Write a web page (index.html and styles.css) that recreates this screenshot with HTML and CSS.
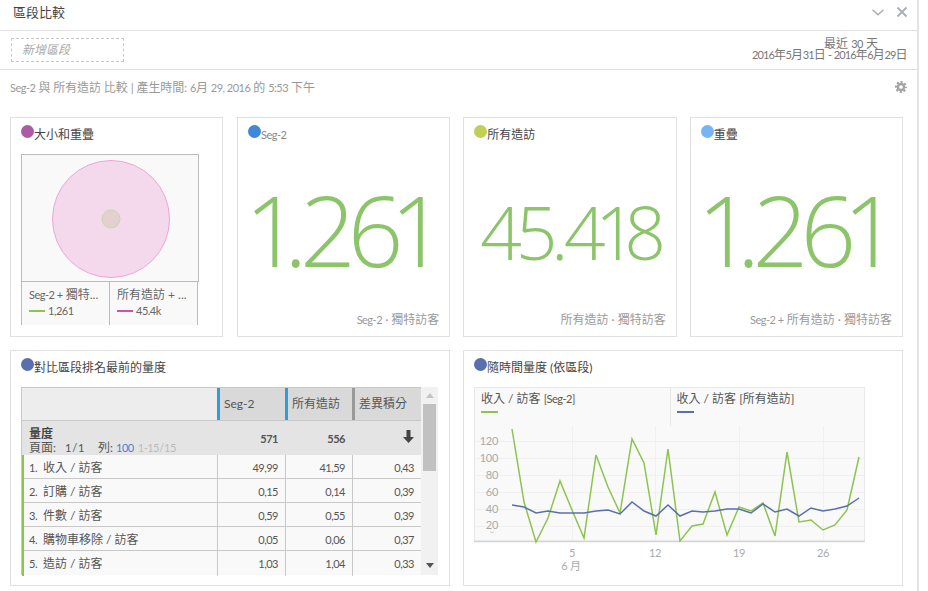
FILE: index.html
```html
<!doctype html>
<html>
  <head>
    <meta name="viewport" content="width=device-width, initial-scale=1">
    <link rel="stylesheet" href="styles.css">
    <title>區段比較</title>
  </head>
  <body>
    <div class="panel">
      <header class="title-bar">
        <h1>區段比較</h1>
        <div class="window-btns">
          <svg width="12" height="7" viewBox="0 0 12 7"><path d="M.5 .7L6 5.800 11.500 .7" fill="none" stroke="#a9b0b5" stroke-width="1.500"/></svg>
          <svg width="10" height="10" viewBox="0 0 10 10"><path d="M.5 .5l9 9M9.500 .5l-9 9" fill="none" stroke="#a9b0b5" stroke-width="2"/></svg>
        </div>
      </header>

      <div class="filter-bar">
        <div class="add-segment">新增區段</div>
        <div class="date-range">
          <div class="date-preset">最近 <span class="n">30</span> 天</div>
          <div class="date-dates"><span class="n">2016</span>年<span class="n">5</span>月<span class="n">31</span>日 <span class="n">-</span> <span class="n">2016</span>年<span class="n">6</span>月<span class="n">29</span>日</div>
        </div>
      </div>

      <div class="summary">
        <span><span class="n">Seg-2</span> 與 所有造訪 比較 | 產生時間: <span class="n">6</span>月 <span class="n">29, 2016</span> 的 <span class="n">5:53</span> 下午</span>
        <svg width="12" height="12" viewBox="0 0 13 13">
          <circle cx="6.500" cy="6.500" r="3.300" fill="none" stroke="#a5a5a5" stroke-width="2.600"/>
          <circle cx="6.500" cy="6.500" r="5.300" fill="none" stroke="#a5a5a5" stroke-width="2.400" stroke-dasharray="2.300 1.860" stroke-dashoffset="1.150"/>
        </svg>
      </div>

      <div class="card-row">
        <section class="card card-venn">
          <h2 class="card-title"><i class="dot dot-purple"></i>大小和重疊</h2>
          <div class="venn">
            <svg width="176" height="126" viewBox="0 0 176 126">
              <circle cx="89" cy="64" r="58.500" fill="#f4d9ec" stroke="#eda6d5"/>
              <circle cx="89" cy="64" r="9" fill="#e3d0cf" stroke="#c5d9a2"/>
            </svg>
          </div>
          <div class="venn-legend">
            <div class="venn-item">
              <div class="venn-name"><span class="n">Seg-2 +</span> 獨特...</div>
              <div class="venn-val"><i class="key key-green"></i>1,261</div>
            </div>
            <div class="venn-item">
              <div class="venn-name">所有造訪 + ...</div>
              <div class="venn-val"><i class="key key-pink"></i>45.4k</div>
            </div>
          </div>
        </section>

        <section class="card card-metric">
          <h2 class="card-title"><i class="dot dot-blue"></i><span class="small-title n">Seg-2</span></h2>
          <div class="big-num">1.261</div>
          <div class="metric-note"><span class="n">Seg-2</span> · 獨特訪客</div>
        </section>

        <section class="card card-metric">
          <h2 class="card-title"><i class="dot dot-olive"></i>所有造訪</h2>
          <div class="big-num big-num-small">45.418</div>
          <div class="metric-note">所有造訪 · 獨特訪客</div>
        </section>

        <section class="card card-metric">
          <h2 class="card-title"><i class="dot dot-sky"></i>重疊</h2>
          <div class="big-num">1.261</div>
          <div class="metric-note"><span class="n">Seg-2 +</span> 所有造訪 · 獨特訪客</div>
        </section>
      </div>

      <div class="card-row card-row-low">
        <section class="card card-wide">
          <h2 class="card-title"><i class="dot dot-indigo"></i>對比區段排名最前的量度</h2>
          <div class="table-wrap">
            <div class="table">
              <div class="t-row t-head">
                <div class="c-name"></div>
                <div class="c-num seg seg-blue">Seg-2</div>
                <div class="c-num seg seg-blue">所有造訪</div>
                <div class="c-num seg seg-gray">差異積分</div>
              </div>
              <div class="t-row t-sub">
                <div class="c-name">
                  <div class="sub-title">量度</div>
                  <div class="pager">頁面: <span class="pager-gap n">1 / 1</span>列: <span class="pager-link n">100</span> <span class="pager-mute n">1-15 / 15</span></div>
                </div>
                <div class="c-num">571</div>
                <div class="c-num">556</div>
                <div class="c-num"><svg width="11" height="13" viewBox="0 0 11 13"><path fill="#444" d="M3.500 0h4v7H11l-5.500 6L0 7h3.500z"/></svg></div>
              </div>
              <div class="t-row t-body">
                <div class="c-name"><span class="rank">1.</span>收入 / 訪客</div>
                <div class="c-num">49,99</div><div class="c-num">41,59</div><div class="c-num">0,43</div>
              </div>
              <div class="t-row t-body">
                <div class="c-name"><span class="rank">2.</span>訂購 / 訪客</div>
                <div class="c-num">0,15</div><div class="c-num">0,14</div><div class="c-num">0,39</div>
              </div>
              <div class="t-row t-body">
                <div class="c-name"><span class="rank">3.</span>件數 / 訪客</div>
                <div class="c-num">0,59</div><div class="c-num">0,55</div><div class="c-num">0,39</div>
              </div>
              <div class="t-row t-body">
                <div class="c-name"><span class="rank">4.</span>購物車移除 / 訪客</div>
                <div class="c-num">0,05</div><div class="c-num">0,06</div><div class="c-num">0,37</div>
              </div>
              <div class="t-row t-body t-last">
                <div class="c-name"><span class="rank">5.</span>造訪 / 訪客</div>
                <div class="c-num">1,03</div><div class="c-num">1,04</div><div class="c-num">0,33</div>
              </div>
            </div>
            <div class="scrollbar">
              <svg class="arrow" width="8" height="5" viewBox="0 0 8 5"><path d="M4 0l4 5H0z" fill="#c4c4c4"/></svg>
              <div class="thumb"></div>
              <svg class="arrow arrow-down" width="8" height="5" viewBox="0 0 8 5"><path d="M0 0h8L4 5z" fill="#555"/></svg>
            </div>
          </div>
        </section>

        <section class="card card-wide">
          <h2 class="card-title"><i class="dot dot-indigo"></i>隨時間量度 (依區段)</h2>
          <div class="trend">
            <div class="trend-legend">
              <div class="trend-key"><div>收入 / 訪客 <span class="n">[Seg-2]</span></div><i class="key key-long key-green"></i></div>
              <div class="trend-key trend-key-2"><div>收入 / 訪客 [所有造訪]</div><i class="key key-long key-indigo"></i></div>
            </div>
            <svg class="plot" width="391" height="152" viewBox="474 426 391 152">
              <rect x="474.500" y="425" width="390" height="116" fill="#f9f9f9" stroke="#e8e8e8"/>
              <g stroke="#f0f0f0" stroke-width="1">
                <path d="M475 441.500h389M475 458.500h389M475 475.500h389M475 492.500h389M475 509.500h389M475 526.500h389"/>
                <path d="M572.500 426v115M655.500 426v115M739.500 426v115M823.500 426v115"/>
              </g>
              <path d="M474 541.500h392" stroke="#d4d4d4" stroke-width="1.500"/>
              <path d="M490 531.500l2 1.500 2-1.500" fill="none" stroke="#ccc"/>
              <g class="y-labels" text-anchor="end">
                <text x="498" y="445">120</text>
                <text x="498" y="462">100</text>
                <text x="498" y="479">80</text>
                <text x="498" y="496">60</text>
                <text x="498" y="513">40</text>
                <text x="498" y="529">20</text>
              </g>
              <g class="x-labels" text-anchor="middle">
                <text x="572" y="557">5</text>
                <text x="655" y="557">12</text>
                <text x="739" y="557">19</text>
                <text x="823" y="557">26</text>
                <text x="571" y="570">6 月</text>
              </g>
              <polyline fill="none" stroke="#8cc44f" stroke-width="1.500" points="512,429 524,502 536,542 548,518 560,481 572,510 584,538 596,455 608,487 620,513 632,439 644,463 656,535 668,449 680,541 692,526 703,524 715,492 727,535 739,507 751,511 763,503 775,536 787,452 799,522 811,520 823,530 835,525 847,510 859,457"/>
              <polyline fill="none" stroke="#5a6fad" stroke-width="1.500" points="512,505 524,507 536,513 548,511 560,513 572,513 584,513 596,511 608,510 620,514 632,502 644,511 656,516 668,505 680,516 692,511 703,512 715,511 727,509 739,509 751,513 763,504 775,512 787,509 799,516 811,508 823,511 835,509 847,506 859,498"/>
            </svg>
          </div>
        </section>
      </div>
    </div>
  </body>
</html>
```

FILE: styles.css
```css
* {
  box-sizing: border-box;
}

body {
  margin: 0;
  background: #fff;
  color: #555;
  font-family: "Lato", "Noto Sans CJK TC", sans-serif;
  font-size: 12px;
  overflow: hidden;
}

/* latin runs are narrower than Lato in the original */
.n,
.c-num,
.venn-val,
.rank {
  font-size: 11px;
  letter-spacing: -.5px;
}

.panel {
  width: 919px;
  height: 591px;
  border-right: 2px solid #e4e4e4;
}

.title-bar {
  height: 31px;
  padding: 0 10px 4px 13px;
  border-bottom: 1px solid #e0e0e0;
  display: flex;
  align-items: center;
  justify-content: space-between;
}

.title-bar h1 {
  margin: 0 0 3px;
  font-size: 13px;
  font-weight: 400;
  color: #444;
}

.window-btns {
  display: flex;
  align-items: center;
  gap: 13px;
  margin-top: -2px;
}

.filter-bar {
  height: 39px;
  padding: 7px 10px 0 11px;
  border-bottom: 1px solid #e0e0e0;
  display: flex;
  justify-content: space-between;
}

.add-segment {
  width: 113px;
  height: 24px;
  padding-left: 10px;
  border: 1px dashed #c8c8c8;
  color: #aaa;
  font-style: italic;
  line-height: 22px;
}

.date-range {
  text-align: right;
  color: #777;
  line-height: 11px;
}

.date-preset {
  margin-right: 29px;
}

.date-dates {
  letter-spacing: -.4px;
}

.date-dates .n {
  letter-spacing: -.9px;
}

.summary {
  height: 35px;
  padding: 0 10px 2px 10px;
  display: flex;
  align-items: center;
  justify-content: space-between;
  color: #999;
  letter-spacing: -.1px;
}

.card-row {
  width: 893px;
  display: flex;
  gap: 13px;
  margin: 12px 0 0 10px;
}

.card-row-low {
  margin-top: 13px;
}

.card {
  border: 1px solid #e0e0e0;
  height: 220px;
  padding: 8px 10px 0;
}

.card-venn {
  flex: none;
  width: 213px;
  margin-right: 1px;
}

.card-metric {
  flex: 1;
  display: flex;
  flex-direction: column;
  padding-bottom: 9px;
}

.card-row-low .card {
  flex: 1;
  height: 236px;
}

.card-title {
  margin: 0;
  height: 18px;
  font-size: 12px;
  font-weight: 400;
  color: #444;
  display: flex;
  align-items: center;
  line-height: 16px;
}

.small-title {
  color: #888;
}

.dot {
  width: 13px;
  height: 13px;
  border-radius: 50%;
  margin-top: -8px;
  flex: none;
}

.dot-purple { background: #a95ba5; }
.dot-blue { background: #3f87d8; }
.dot-olive { background: #c0cf55; }
.dot-sky { background: #78b4f4; }
.dot-indigo { background: #5a6fad; }

.venn {
  margin-top: 10px;
  width: 178px;
  height: 128px;
  border: 1px solid #bcbcbc;
  background: #f9f9f9;
}

.venn-legend {
  width: 177px;
  height: 43px;
  display: flex;
  background: #f9f9f9;
  border-right: 1px solid #bcbcbc;
}

.venn-item {
  padding: 5px 0 0 7px;
  border-left: 1px solid #bcbcbc;
  width: 88px;
  line-height: 16px;
  color: #666;
}

.venn-val {
  display: flex;
  align-items: center;
}

.key {
  display: block;
  width: 16px;
  height: 2px;
  margin-right: 3px;
}

.key-green { background: #8cc44f; }
.key-pink { background: #d54fa5; }
.key-indigo { background: #5a6fad; }

.big-num {
  margin-top: 30px;
  padding-right: 6px;
  height: 110px;
  text-align: center;
  color: #8cc46a;
  font-family: "Open Sans", sans-serif;
  font-size: 98px;
  font-weight: 300;
  font-variant-numeric: proportional-nums;
  line-height: 110px;
  letter-spacing: -6px;
  white-space: nowrap;
}

.big-num-small {
  margin-top: 33px;
  padding-right: 0;
  font-size: 73px;
  letter-spacing: -5.500px;
}

.metric-note {
  margin-top: auto;
  text-align: right;
  color: #999;
}

.table-wrap {
  margin-top: 10px;
  width: 418px;
  height: 188px;
  display: flex;
}

.table {
  width: 400px;
  border: 1px solid #c8c8c8;
  border-bottom: 0;
  border-right: 0;
}

.t-row {
  display: grid;
  grid-template-columns: 195px 68px 67px 69px;
}

.t-head {
  height: 33px;
  background: #ededed;
  border-bottom: 1px solid #c8c8c8;
}

.t-head .c-num.seg {
  background: #d9d9d9;
  padding-left: 4px;
  font-size: 12px;
  letter-spacing: 0;
  line-height: 32px;
  color: #555;
  text-align: left;
}

.seg-blue { border-left: 3px solid #2f9ed8; }
.seg-gray { border-left: 3px solid #999; }

.t-sub {
  height: 34px;
  background: #e4e4e4;
}

.t-sub .c-name {
  padding: 6px 0 0 7px;
}

.t-sub .c-num {
  font-weight: 700;
  line-height: 36px;
}

.sub-title {
  font-weight: 700;
  line-height: 14px;
  color: #444;
}

.pager {
  line-height: 14px;
  color: #555;
}

.pager-gap {
  margin: 0 14px 0 6px;
  word-spacing: -1px;
}

.pager-link { color: #4a7fd0; }

.pager-mute {
  color: #bbb;
  margin-left: 1px;
  word-spacing: -2px;
}

.c-num {
  text-align: right;
  padding-right: 7px;
}

.t-body {
  height: 24px;
  background: #f9f9f9;
  border-bottom: 1px solid #c8c8c8;
  line-height: 25px;
}

.t-last {
  border-bottom: 0;
}

.t-body .c-name {
  padding-left: 5px;
  border-left: 2px solid #8cc44f;
  color: #555;
}

.t-body .c-num {
  border-left: 1px solid #c8c8c8;
}

.rank {
  display: inline-block;
  width: 14px;
}

.scrollbar {
  width: 17px;
  background: #f1f1f1;
  display: flex;
  flex-direction: column;
  align-items: center;
  padding-top: 6px;
}

.thumb {
  width: 13px;
  height: 67px;
  margin-top: 6px;
  background: #c1c1c1;
}

.arrow-down {
  margin-top: auto;
  margin-bottom: 7px;
}

.trend {
  margin-top: 10px;
  width: 391px;
}

.trend-legend {
  height: 39px;
  background: #f9f9f9;
  border: 1px solid #e8e8e8;
  border-bottom: 0;
  display: flex;
}

.trend-key {
  width: 195px;
  padding: 1px 0 0 6px;
  color: #555;
}

.trend-key-2 {
  border-left: 1px solid #e8e8e8;
}

.key-long {
  width: 17px;
  margin-top: 5px;
}

.plot {
  display: block;
}

.plot text {
  font-family: "Lato", "Noto Sans CJK TC", sans-serif;
  font-size: 11px;
  letter-spacing: -.3px;
  fill: #aaa;
}
```
